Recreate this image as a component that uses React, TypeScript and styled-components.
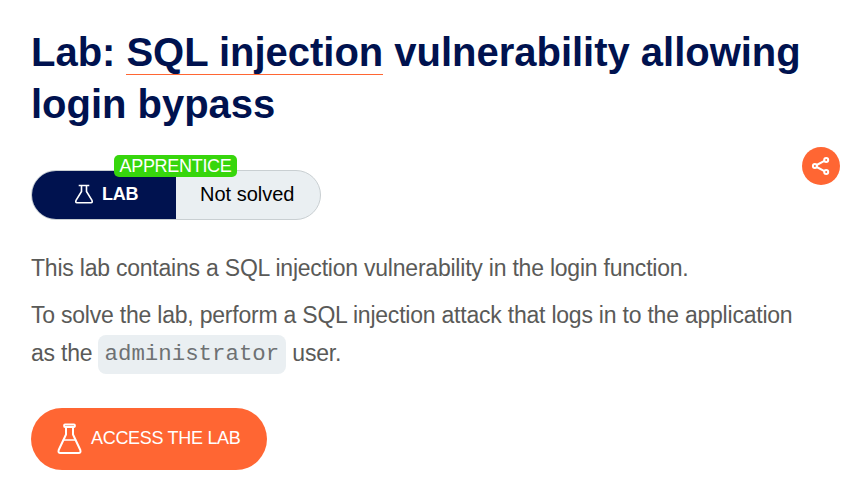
import React from "react";
import styled, { createGlobalStyle } from "styled-components";

const GlobalStyle = createGlobalStyle`
  * { box-sizing: border-box; }
  body { margin: 0; background: #fff; font-family: "Liberation Sans", Arial, sans-serif; }
`;

const Page = styled.main`
  width: 861px;
  height: 483px;
  overflow: hidden;
  padding: 26px 21px 0 31px;
`;

const Title = styled.h1`
  margin: 0;
  width: 790px;
  color: #00124f;
  font-size: 40px;
  font-weight: 700;
  letter-spacing: -0.02px;
  line-height: 52px;
`;

const TopicLink = styled.a`
  color: inherit;
  text-decoration: none;
  border-bottom: 1px solid #ff6633;
`;

const StatusRow = styled.div`
  display: flex;
  justify-content: space-between;
  align-items: flex-start;
  margin-top: 17px;
  height: 73px;
`;

const StatusPill = styled.div`
  position: relative;
  display: flex;
  width: 290px;
  height: 50px;
  margin-top: 23px;
  border: 1px solid #c9cfd2;
  border-radius: 25px;
  background: #eaeff2;
`;

const LabType = styled.div`
  display: flex;
  align-items: center;
  width: 144px;
  padding: 0 0 2px 42px;
  gap: 8px;
  border-radius: 24px 0 0 24px;
  background: #00124f;
  color: #fff;
  font-size: 18px;
  font-weight: 700;
  letter-spacing: -0.2px;
`;

const LabState = styled.div`
  padding-left: 24px;
  color: #000;
  font-size: 20px;
  line-height: 47px;
  white-space: nowrap;
`;

const LevelBadge = styled.span`
  position: absolute;
  left: 82px;
  top: -16px;
  width: 123px;
  height: 22px;
  border-radius: 5px;
  background: #37d60c;
  color: #fff;
  font-size: 18px;
  letter-spacing: -0.3px;
  line-height: 22px;
  text-align: center;
  white-space: nowrap;
`;

const ShareButton = styled.button`
  display: flex;
  align-items: center;
  justify-content: center;
  width: 38px;
  height: 38px;
  padding: 0;
  border: 0;
  border-radius: 50%;
  background: #ff6633;
`;

const Description = styled.div`
  display: flex;
  flex-direction: column;
  gap: 9px;
  margin-top: 29px;
  color: #5a5a58;
  font-size: 23px;
  letter-spacing: -0.22px;
  line-height: 38px;
`;

const Paragraph = styled.p`
  margin: 0;
  white-space: nowrap;
`;

const Code = styled.code`
  position: relative;
  top: -1px;
  margin-left: -1px;
  padding: 6px 7px 7px 7px;
  border-radius: 8px;
  background: #eaeff2;
  color: #6e7173;
  font-family: "Liberation Mono", "Courier New", monospace;
  font-size: 22.4px;
  letter-spacing: 0;
  line-height: 26px;
`;

const AccessButton = styled.button`
  display: flex;
  align-items: center;
  gap: 9px;
  width: 236px;
  height: 62px;
  margin-top: 36px;
  padding: 0 0 0 26px;
  border: 0;
  border-radius: 31px;
  background: #ff6633;
  color: #fff;
  font: 18px/24px "Liberation Sans", Arial, sans-serif;
  letter-spacing: -0.3px;
  white-space: nowrap;
`;

const AccessLabel = styled.span`
  padding-bottom: 2px;
`;

const SmallFlask = () => (
  <svg width="20" height="20" viewBox="0 0 20 20" fill="none" stroke="#fff" strokeWidth="1.6" strokeLinejoin="round">
    <path d="M4.7 1.5h10.6M7.5 1.5v6L2 16.4Q1.2 18.7 3 18.7h14Q18.8 18.7 18 16.4L12.5 7.5v-6" />
  </svg>
);

const LargeFlask = () => (
  <svg width="25" height="32" viewBox="0 0 25 32" fill="none" stroke="#fff" strokeWidth="2" strokeLinejoin="round" strokeLinecap="round">
    <path d="M8 1.6h9q.9 0 .9 1.2t-.9 1.2H8q-.9 0-.9-1.2t.9-1.2zM9 4v7.5L1.7 27Q.8 30 3.5 30h18q2.7 0 1.8-3L16 11.5V4" />
    <path strokeWidth="1.5" d="M6.5 17h12" />
  </svg>
);

const ShareIcon = () => (
  <svg width="20" height="20" viewBox="0 0 20 20" fill="none" stroke="#fff" strokeWidth="2">
    <circle cx="3.9" cy="10" r="2" />
    <circle cx="15.2" cy="4" r="2" />
    <circle cx="15.2" cy="16" r="2" />
    <path d="M5.7 9l7.7-4.1M5.7 11l7.7 4.1" />
  </svg>
);

export default function App() {
  return (
    <>
      <GlobalStyle />
      <Page>
        <Title>
          Lab: <TopicLink>SQL injection</TopicLink> vulnerability allowing<br />login bypass
        </Title>
        <StatusRow>
          <StatusPill>
            <LabType><SmallFlask />LAB</LabType>
            <LabState>Not solved</LabState>
            <LevelBadge>APPRENTICE</LevelBadge>
          </StatusPill>
          <ShareButton aria-label="Share"><ShareIcon /></ShareButton>
        </StatusRow>
        <Description>
          <Paragraph>This lab contains a SQL injection vulnerability in the login function.</Paragraph>
          <Paragraph>
            To solve the lab, perform a SQL injection attack that logs in to the application<br />
            as the <Code>administrator</Code> user.
          </Paragraph>
        </Description>
        <AccessButton><LargeFlask /><AccessLabel>ACCESS THE LAB</AccessLabel></AccessButton>
      </Page>
    </>
  );
}
